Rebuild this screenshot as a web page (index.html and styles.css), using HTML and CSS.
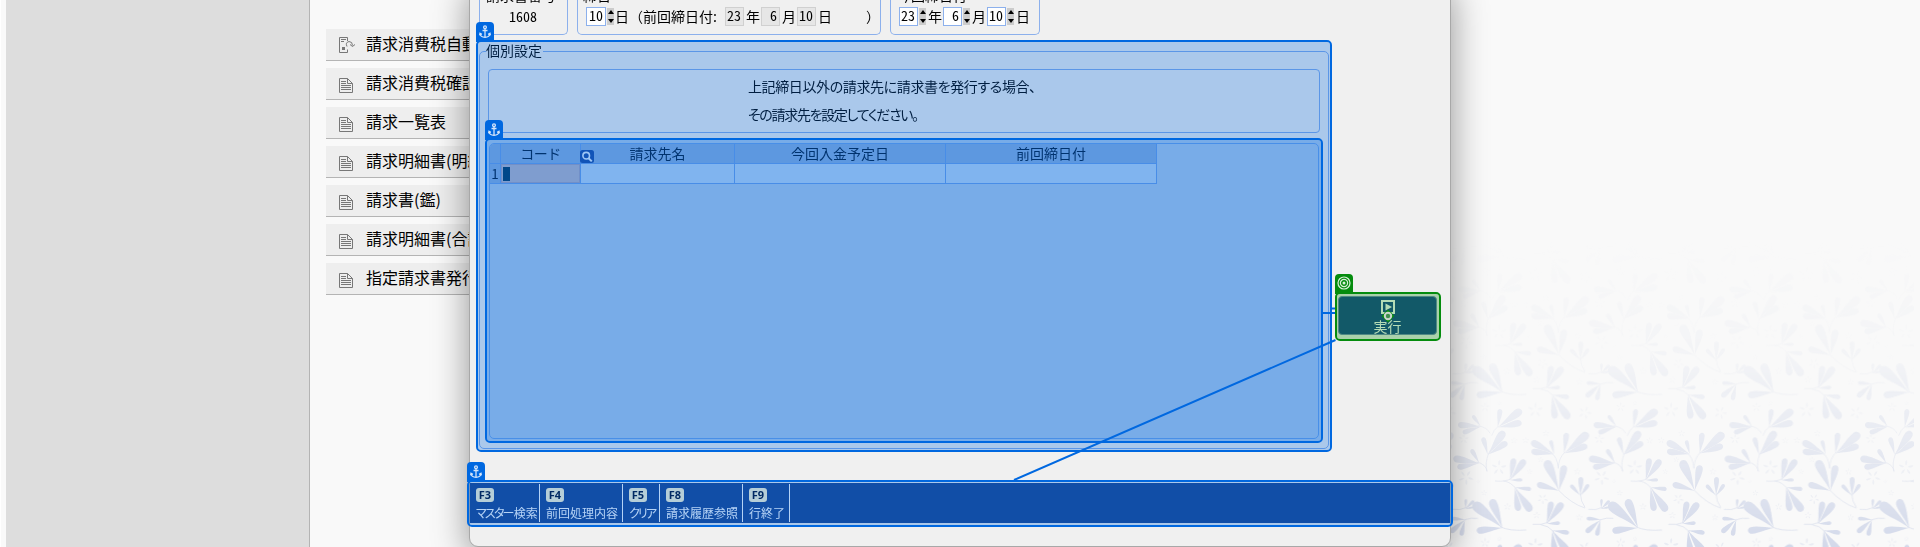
FILE: index.html
```html
<!DOCTYPE html>
<html lang="ja">
<head>
<meta charset="utf-8">
<title>請求書発行</title>
<link rel="stylesheet" href="styles.css">
</head>
<body>
<svg class="defs" width="0" height="0" aria-hidden="true">
  <defs>
    <path id="leaf" d="M0 0C.3-.02.6-.14.84-.14C1.04-.13 1.05.1 .88 .125C.66.16.3.05 0 0Z"/>
    <g id="flower">
      <path id="petal" d="M0-.25C.2-.5.2-.85.05-1C-.15-.8-.15-.5 0-.25Z"/>
      <use href="#petal" transform="rotate(72)"/><use href="#petal" transform="rotate(144)"/>
      <use href="#petal" transform="rotate(216)"/><use href="#petal" transform="rotate(288)"/>
    </g>
    <g id="motif">
      <use href="#leaf" transform="matrix(-87 -75 75 -87 157 384)"/>
      <use href="#leaf" transform="matrix(-32 -86 86 -32 157 384)"/>
      <use href="#leaf" transform="matrix(-77 8 -8 -77 157 384)"/>
      <use href="#leaf" transform="matrix(-38 -91 91 -38 327 272)"/>
      <use href="#leaf" transform="matrix(17 -76 76 17 327 272)"/>
      <use href="#leaf" transform="matrix(-66 -20 20 -66 327 272)"/>
      <use href="#leaf" transform="matrix(2 -56 56 2 391 287)"/>
      <use href="#leaf" transform="matrix(-29 -32 32 -29 391 287)"/>
      <use href="#leaf" transform="matrix(25 -34 34 25 391 287)"/>
      <use href="#leaf" transform="matrix(12 -65 65 12 180 240)"/>
      <use href="#leaf" transform="matrix(45 -60 60 45 180 240)"/>
      <use href="#leaf" transform="matrix(37 0 0 37 180 240)"/>
      <use href="#leaf" transform="matrix(48 6 -6 48 195 262)"/>
      <use href="#leaf" transform="matrix(10 71 -71 10 195 262)"/>
      <use href="#leaf" transform="matrix(48 72 -72 48 195 262)"/>
      <use href="#leaf" transform="matrix(15 -66 66 15 290 371)"/>
      <use href="#leaf" transform="matrix(48 -62 62 48 290 371)"/>
      <use href="#leaf" transform="matrix(40 -2 2 40 290 371)"/>
      <use href="#leaf" transform="matrix(50 8 -8 50 307 391)"/>
      <use href="#leaf" transform="matrix(8 72 -72 8 307 391)"/>
      <use href="#leaf" transform="matrix(50 72 -72 50 307 391)"/>
      <use href="#leaf" transform="matrix(-68 -38 38 -68 312 163)"/>
      <use href="#leaf" transform="matrix(-10 -42 42 -10 312 163)"/>
      <use href="#leaf" transform="matrix(-68 -9 9 -68 312 163)"/>
      <use href="#leaf" transform="matrix(8 -62 62 8 342 160)"/>
      <use href="#leaf" transform="matrix(73 -60 60 73 342 160)"/>
      <use href="#leaf" transform="matrix(70 -23 23 70 342 160)"/>
      <use href="#leaf" transform="matrix(-24 -42 42 -24 88 190)"/>
      <use href="#leaf" transform="matrix(-78 -16 16 -78 88 190)"/>
      <use href="#leaf" transform="matrix(-66 12 -12 -66 88 190)"/>
      <use href="#leaf" transform="matrix(-14 -52 52 -14 113 164)"/>
      <use href="#leaf" transform="matrix(50 -70 70 50 113 164)"/>
      <use href="#leaf" transform="matrix(59 -37 37 59 113 164)"/>
      <use href="#leaf" transform="matrix(-24 -34 34 -24 92 80)"/>
      <use href="#leaf" transform="matrix(-68 -6 6 -68 92 80)"/>
      <use href="#leaf" transform="matrix(-54 18 -18 -54 92 80)"/>
      <use href="#leaf" transform="matrix(8 -55 55 8 143 82)"/>
      <use href="#leaf" transform="matrix(72 -52 52 72 143 82)"/>
      <use href="#leaf" transform="matrix(72 -14 14 72 143 82)"/>
      <use href="#leaf" transform="matrix(2 -28 28 2 46 326)"/>
      <use href="#leaf" transform="matrix(26 -24 24 26 46 326)"/>
      <use href="#leaf" transform="matrix(22 -4 4 22 46 326)"/>
      <use href="#leaf" transform="matrix(-42 -4 4 -42 452 359)"/>
      <use href="#leaf" transform="matrix(-44 38 -38 -44 452 359)"/>
      <use href="#leaf" transform="matrix(-12 48 -48 -12 452 359)"/>
      <g class="stems">
        <path d="M150 380Q178 394 229 390M325 270Q365 312 405 324M391 280Q392 305 405 322M135 243Q165 246 184 236M160 243Q182 245 200 268M248 373Q275 376 294 367M272 374Q295 376 312 396M303 158Q322 170 325 205Q325 175 345 156M80 186Q108 192 111 214Q104 190 116 160M84 77Q112 82 120 100M125 107Q130 90 146 78M8 328Q30 332 50 322M448 360Q470 352 490 355"/>
      </g>
      <g class="flowers">
        <use href="#flower" transform="translate(147 203)scale(23)"/>
        <use href="#flower" transform="translate(48 232)rotate(30)scale(23)"/>
        <use href="#flower" transform="translate(256 30)scale(23)"/>
        <use href="#flower" transform="translate(405 38)rotate(20)scale(20)"/>
        <use href="#flower" transform="translate(278 297)rotate(30)scale(16)"/>
        <use href="#flower" transform="translate(172 320)scale(11)"/>
        <use href="#flower" transform="translate(192 122)scale(10)"/>
        <use href="#flower" transform="translate(227 121)scale(10)"/>
        <use href="#flower" transform="translate(288 100)scale(10)"/>
        <use href="#flower" transform="translate(272 179)scale(9)"/>
        <use href="#flower" transform="translate(239 215)scale(8)"/>
        <use href="#flower" transform="translate(382 215)scale(10)"/>
        <use href="#flower" transform="translate(102 279)scale(9)"/>
        <use href="#flower" transform="translate(260 346)scale(11)"/>
        <use href="#flower" transform="translate(388 352)scale(10)"/>
        <use href="#flower" transform="translate(41 117)scale(15)"/>
        <use href="#flower" transform="translate(105 428)scale(14)"/>
        <use href="#flower" transform="translate(85 244)scale(6)"/>
        <use href="#flower" transform="translate(148 417)scale(7)"/>
      </g>
    </g>
    <g id="motif-row">
      <use href="#motif" x="-407"/><use href="#motif"/><use href="#motif" x="407"/><use href="#motif" x="814"/><use href="#motif" x="1221"/>
    </g>
    <linearGradient id="fade" x1="0" y1="0" x2="0" y2="1">
      <stop offset="0" stop-color="#fff" stop-opacity="0"/>
      <stop offset=".35" stop-color="#fff" stop-opacity=".13"/>
      <stop offset=".65" stop-color="#fff" stop-opacity=".45"/>
      <stop offset="1" stop-color="#fff"/>
    </linearGradient>
    <mask id="fade-mask" maskUnits="userSpaceOnUse" x="0" y="0" width="474" height="307" style="mask-type:alpha"><rect width="474" height="307" fill="url(#fade)"/></mask>
    <symbol id="i-doc" viewBox="0 0 16 16"><path d="M1.5 1.5H9.5L14.5 6.5V15.5H1.5ZM9.5 1.5V6.5H14.5M3 4.5H8M3 6.5H8M3 8.5H13M3 10.5H13M3 12.5H13" fill="none" stroke="#777"/></symbol>
    <symbol id="i-auto" viewBox="0 0 17 17"><path d="M9.5 4V.5H1.5V15.500H9.500V12.500M3 2.500H8M3 4.500H6M9 9.500Q7 5.500 11 4.500Q14.500 4.500 14.500 8.500M12 7.500L14.500 9.500L17 7.500" fill="none" stroke="#777"/><path d="M4 10h3v3H4z" fill="#777"/></symbol>
    <symbol id="i-anchor" viewBox="0 0 12 14"><g fill="none" stroke="#d4e5fa" stroke-width="1.3"><circle cx="6" cy="2.300" r="1.400"/><path d="M6 3.700V12.200M3.500 5.500H8.500M1 8.500Q1.500 12.300 6 12.300Q10.500 12.300 11 8.500M.6 10.400L1 8.300L2.900 9.300M11.400 10.400L11 8.300L9.100 9.300"/></g></symbol>
  </defs>
</svg>

<div class="desktop">
  <aside class="sidebar"></aside>
  <nav class="menu">
    <a class="menu-item"><svg class="menu-icon auto"><use href="#i-auto"/></svg>請求消費税自動計算</a>
    <a class="menu-item"><svg class="menu-icon"><use href="#i-doc"/></svg>請求消費税確認表</a>
    <a class="menu-item"><svg class="menu-icon"><use href="#i-doc"/></svg>請求一覧表</a>
    <a class="menu-item"><svg class="menu-icon"><use href="#i-doc"/></svg>請求明細書(明細)</a>
    <a class="menu-item"><svg class="menu-icon"><use href="#i-doc"/></svg>請求書(鑑)</a>
    <a class="menu-item"><svg class="menu-icon"><use href="#i-doc"/></svg>請求明細書(合計)</a>
    <a class="menu-item"><svg class="menu-icon"><use href="#i-doc"/></svg>指定請求書発行</a>
  </nav>
  <svg class="botanical" viewBox="0 0 474 307" width="474" height="307">
    <g mask="url(#fade-mask)" fill="#d3d9ea"><g transform="translate(10 160) scale(.33333)">
      <use href="#motif-row" y="-814"/><use href="#motif-row" y="-407"/><use href="#motif-row"/><use href="#motif-row" y="407"/>
    </g></g>
  </svg>
</div>

<main class="dialog">
  <div class="groups">
    <section class="group g-number"><div class="group-title">請求書番号</div><div class="fields">1608</div></section>
    <section class="group g-close"><div class="group-title">締日</div>
      <div class="fields"><span class="num">10</span><span class="spin"><i class="up"></i><i class="down"></i></span><span class="u-first">日</span><span class="prev">（前回締日付:</span><span class="num off">23</span><span class="unit">年</span><span class="num off">6</span><span class="unit">月</span><span class="num off">10</span><span class="unit">日</span><span class="paren">）</span></div></section>
    <section class="group g-date"><div class="group-title">今回締日付</div>
      <div class="fields"><span class="num">23</span><span class="spin"><i class="up"></i><i class="down"></i></span><span class="unit2">年</span><span class="num">6</span><span class="spin"><i class="up"></i><i class="down"></i></span><span class="unit2">月</span><span class="num">10</span><span class="spin"><i class="up"></i><i class="down"></i></span><span class="unit2">日</span></div></section>
  </div>
  <div class="body">
    <section class="settings">
      <div class="legend">個別設定</div>
      <div class="notice"><p class="n1">上記締日以外の請求先に請求書を発行する場合、</p><p class="n2">その請求先を設定してください。</p></div>
      <div class="panel">
        <div class="grid">
          <div class="h"></div><div class="h code">コード</div><div class="h name">請求先名</div><div class="h">今回入金予定日</div><div class="h">前回締日付</div>
          <div class="h idx">1</div><div class="c selected"><i class="caret"></i></div><div class="c"></div><div class="c"></div><div class="c"></div>
        </div>
      </div>
    </section>
    <button class="run"><svg width="16" height="22" viewBox="0 0 16 22"><path d="M2 2H14V14H2Z" fill="none" stroke="#fff" stroke-width="2"/><path d="M5.500 4.500L12 8L5.500 11.500Z" fill="#fff"/></svg><span>実行</span></button>
  </div>
  <footer class="toolbar">
    <div class="key k1"><b>F3</b><span><span class="kana">マスター</span>検索</span></div>
    <div class="key k2"><b>F4</b><span>前回処理内容</span></div>
    <div class="key k3"><b>F5</b><span class="kana">クリア</span></div>
    <div class="key k4"><b>F8</b><span>請求履歴参照</span></div>
    <div class="key k5"><b>F9</b><span>行終了</span></div>
  </footer>
</main>

<svg class="search" viewBox="0 0 14 13"><rect width="14" height="13" rx="2.500" fill="#1154b8"/><circle cx="6.200" cy="5.700" r="3.300" fill="none" stroke="#9dc6f6" stroke-width="1.600"/><path d="M8.600 8.200L11.800 11.400" stroke="#9dc6f6" stroke-width="2"/></svg>

<div class="mark outer"></div>
<div class="mark inner"></div>
<div class="mark bar"></div>
<div class="mark target"></div>
<div class="tab t-outer"><svg><use href="#i-anchor"/></svg></div>
<div class="tab t-inner"><svg><use href="#i-anchor"/></svg></div>
<div class="tab t-bar"><svg><use href="#i-anchor"/></svg></div>
<div class="tab t-target"><svg viewBox="0 0 14 14"><g fill="none" stroke="#d9f0d9" stroke-width="1.200"><circle cx="7" cy="7" r="6"/><circle cx="7" cy="7" r="3.600"/></g><circle cx="7" cy="7" r="1.500" fill="#d9f0d9"/></svg></div>
<svg class="links" width="1920" height="547"><path d="M1323 313H1335M1332 308.500H1335M1014 480L1335.500 340" fill="none" stroke="#0068e0" stroke-width="2"/>
  <path d="M1388 309.500L1391 312.500H1392V313.500L1394.500 316L1392 318.500V319.500H1391L1388 322.500L1385 319.500H1384V318.500L1381.500 316L1384 313.500V312.500H1385Z" fill="#078d10"/><circle cx="1388" cy="316" r="3.200" fill="#3f8f4c" stroke="#c9d6cc" stroke-width="2"/></svg>
</body>
</html>
```
FILE: styles.css
```css
* { box-sizing: border-box; }
body {
  margin: 0; width: 1920px; height: 547px; overflow: hidden; position: relative;
  background: #f9f9f9; color: #000;
  font: 14px/14px "Noto Sans CJK JP", sans-serif;
}
p { margin: 0; }
.defs { position: absolute; }
.stems { fill: none; stroke: #d3d9ea; stroke-width: 2; }
.flowers { opacity: .4; }

.desktop { display: flex; height: 547px; border-left: 1px solid #fff; padding-left: 5px; }
.sidebar { width: 304px; background: #ddd; border-right: 1px solid #b4b4b4; }
.menu { width: 300px; margin-left: 16px; padding-top: 29px; display: flex; flex-direction: column; gap: 7px; }
.menu-item {
  display: flex; align-items: center; height: 32px; padding: 0 0 3px 12px;
  background: #eee; border-bottom: 1px solid #b4b4b4; font-size: 16px; white-space: nowrap;
}
.menu-icon { width: 16px; height: 16px; margin: 5px 12px 0 0; flex: none; }
.menu-icon.auto { width: 17px; height: 17px; margin: 4px 11px 0 0; }
.botanical { margin: 240px 6px 0 auto; display: block; }

.dialog {
  position: absolute; left: 469px; top: -20px; width: 982px; height: 567px; padding-top: 20px;
  background: #f0f0f0; border: 1px solid #a8a8a8; border-radius: 9px;
  box-shadow: 0 9px 36px rgba(0,0,0,.42);
}
.groups { display: flex; margin: -1px 0 0 9px; height: 35px; }
.group { border: 1px solid #8cb0ec; border-top: 0; border-radius: 0 0 5px 5px; height: 35px; }
.g-number { width: 89px; margin-right: 9px; }
.g-close { width: 304px; margin-right: 9px; }
.g-date { width: 150px; }
.group-title { margin: -12px 0 0 6px; height: 15px; white-space: nowrap; }
.g-close .group-title { margin-left: 5px; }
.fields { display: flex; align-items: center; height: 19px; margin-top: 4px; font-feature-settings: "hwid"; white-space: pre; line-height: 14px; }
.g-number .fields { padding: 0 0 2px 29px; }
.g-close .fields, .g-date .fields { padding-left: 8px; }
.num { width: 20px; height: 19px; line-height: 15px; padding-right: 2px; text-align: right; background: #fff; border: 1px solid #8cb0ec; flex: none; }
.num.off { width: 19px; background: #e6e6e6; border-color: #d0d0d0; }
.g-date .num { width: 19px; }
.spin { width: 7px; height: 17px; margin-left: 1px; display: flex; flex-direction: column; justify-content: space-between; background: #ccc; flex: none; }
.spin i { width: 0; height: 0; margin: 2px auto; border: 3px solid transparent; }
.spin .up { border-top: 0; border-bottom: 4px solid #000; }
.spin .down { border-bottom: 0; border-top: 4px solid #000; }
.u-first, .prev, .unit, .unit2, .paren { padding-bottom: 2px; flex: none; }
.u-first { width: 14px; margin-left: 1px; }
.prev { width: 96px; font-feature-settings: normal; }
.unit { width: 14px; margin: 0 1px 0 2px; }
.paren { margin-left: 33px; width: 14px; font-feature-settings: normal; }
.unit2 { width: 14px; margin: 0 1px 0 2px; }

.body { display: flex; margin: 16px 0 0 9px; height: 398px; }
.settings { position: relative; width: 850px; height: 398px; border: 1px solid #80a9ea; border-radius: 5px; padding: 17px 8px 0; }
.legend { position: absolute; left: 6px; top: -9px; padding-right: 1px; background: #f0f0f0; }
.notice { width: 832px; height: 64px; border: 1px solid #80a9ea; border-radius: 4px; padding: 9px 0 0 259px; white-space: nowrap; }
.notice p { line-height: 14px; margin-bottom: 14px; font-feature-settings: "palt"; }
.n1 { letter-spacing: -.38px; }
.n2 { letter-spacing: -1.3px; }
.panel { margin: 10px 1px 0 1px; width: 830px; height: 296px; border: 1px solid #90b8f0; border-radius: 5px; overflow: hidden; }
.grid { display: grid; grid-template-columns: 11px 80px 154px 211px 211px; grid-template-rows: 20px 20px; width: 667px; }
.grid > div { border-right: 1px solid #90b4ee; border-bottom: 1px solid #90b4ee; }
.h { background: #bac8e1; text-align: center; line-height: 18px; }
.code { letter-spacing: -.5px; }
.idx { font-feature-settings: "hwid"; }
.c { background: #fff; }
.selected { background: #fdd2c0; padding: 3px 0 0 2px; box-shadow: inset 0 0 0 1px #e0b8b0; }
.caret { display: block; width: 7px; height: 14px; background: #002a38; }
.run {
  width: 99px; height: 39px; margin: 245px 0 0 9px; padding: 2px 0 0; border: 1px solid #7088b8; border-radius: 4px;
  background: #184490; color: #fff; font: inherit; display: flex; flex-direction: column; align-items: center; justify-content: flex-start;
}
.run span { margin-top: -2px; line-height: 14px; }
.run svg { flex: none; }
.toolbar { display: flex; height: 40px; margin-top: 34px; padding: 1px 0; background: #184490; color: #fff; }
.key { border-right: 1px solid #fff; padding: 4px 0 0 6px; display: flex; flex-direction: column; align-items: flex-start; white-space: nowrap; font-size: 12px; line-height: 13px; }
.key b { width: 18px; height: 14px; border-radius: 3px; background: #fff8d5; color: #001030; text-align: center; font: bold 11px/14px "Noto Sans", sans-serif; margin-bottom: 4px; }
.k1 { width: 70px; } .k2 { width: 83px; } .k3 { width: 37px; } .k4 { width: 83px; } .k5 { width: 47px; }
.kana { font-feature-settings: "palt"; letter-spacing: -1.8px; margin-right: 1px; }

.search { position: absolute; left: 580px; top: 150px; width: 14px; height: 13px; z-index: 3; }
.mark { position: absolute; border: 2px solid #0068e0; border-radius: 5px; background: rgba(0,104,224,.29); background-clip: padding-box; }
.outer { left: 476px; top: 40px; width: 856px; height: 412px; }
.inner { left: 485px; top: 138px; width: 838px; height: 305px; }
.bar { left: 467px; top: 480px; width: 986px; height: 47px; }
.target { left: 1335px; top: 292px; width: 106px; height: 49px; border-color: #058c0e; background-color: rgba(5,140,14,.3); }
.tab { position: absolute; width: 18px; height: 20px; border-radius: 4px 4px 0 0; background: #0068e0; display: flex; justify-content: center; padding-top: 3px; }
.tab svg { width: 12px; height: 14px; }
.t-outer { left: 476px; top: 22px; }
.t-inner { left: 485px; top: 120px; }
.t-bar { left: 467px; top: 462px; }
.t-target { left: 1335px; top: 274px; background: #058c0e; padding-top: 2px; }
.t-target svg { width: 14px; height: 14px; }
.links { position: absolute; left: 0; top: 0; }
```
